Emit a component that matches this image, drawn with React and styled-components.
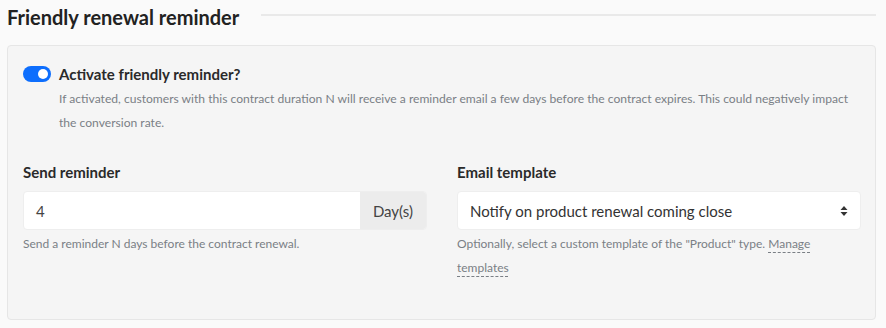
import styled, { createGlobalStyle } from "styled-components";

const Global = createGlobalStyle`
  body {
    margin: 0;
    background: #fafafa;
    font-family: Lato, "Liberation Sans", sans-serif;
    color: #212529;
  }
`;

const Page = styled.div`
  padding: 3px 10px 7px 7px;
`;

const Header = styled.div`
  display: flex;
  align-items: center;
  gap: 22px;
  height: 27px;
  h2 {
    margin: 0;
    font-size: 20px;
    font-weight: 700;
    color: #222;
    white-space: nowrap;
  }
`;

const Rule = styled.div`
  flex: 1;
  height: 2px;
  margin-top: -3px;
  background: #e9e9e9;
`;

const Card = styled.div`
  margin-top: 15px;
  background: #f5f5f5;
  border: 1px solid #e6e6e6;
  border-radius: 4px;
  padding: 19px 14px 39px 15px;
`;

const SwitchRow = styled.div`
  display: flex;
  align-items: center;
  gap: 8px;
  height: 18px;
  font-size: 15px;
  font-weight: 700;
  color: #2a2a2a;
`;

const Switch = styled.span`
  position: relative;
  width: 28px;
  height: 16px;
  border-radius: 8px;
  background: ${(p) => (p.$on ? "#0d6efd" : "#ccc")};
  flex-shrink: 0;
  &::after {
    content: "";
    position: absolute;
    top: 3px;
    left: ${(p) => (p.$on ? "15px" : "3px")};
    width: 10px;
    height: 10px;
    border-radius: 50%;
    background: #fff;
  }
`;

const Hint = styled.p`
  margin: 4px 0 0 36px;
  font-size: 12.1px;
  line-height: 24px;
  color: #7a7f85;
`;

const Grid = styled.div`
  display: grid;
  grid-template-columns: 1fr 1fr;
  column-gap: 30px;
  margin-top: 27px;
`;

const Field = styled.div`
  display: flex;
  flex-direction: column;
`;

const Label = styled.label`
  font-size: 15px;
  font-weight: 700;
  color: #2a2a2a;
  line-height: 20px;
  margin-bottom: 9px;
`;

const InputGroup = styled.div`
  display: flex;
  height: 37px;
  border: 1px solid #eeeeee;
  border-radius: 4px;
  overflow: hidden;
  background: #fff;
`;

const Input = styled.div`
  flex: 1;
  display: flex;
  align-items: center;
  padding: 0 12px;
  font-size: 15px;
  color: #444;
`;

const Addon = styled.div`
  display: flex;
  align-items: center;
  padding: 0 13px;
  background: #ececec;
  font-size: 15px;
  color: #444;
`;

const Select = styled.div`
  display: flex;
  align-items: center;
  justify-content: space-between;
  height: 37px;
  border: 1px solid #eeeeee;
  border-radius: 4px;
  background: #fff;
  padding: 0 12px 0 12px;
  font-size: 15px;
  color: #333;
`;

const Help = styled.div`
  margin-top: 2px;
  font-size: 12px;
  line-height: 24px;
  color: #7a7f85;
  a {
    color: inherit;
    text-decoration: underline dashed #7a7f85;
    text-underline-offset: 4px;
  }
`;

const Caret = () => (
  <svg width="8" height="12" viewBox="0 0 8 12">
    <path d="M4 1 L7.5 5 H0.5 Z" fill="#333" />
    <path d="M4 11 L7.5 7 H0.5 Z" fill="#333" />
  </svg>
);

export default function App() {
  return (
    <Page>
      <Global />
      <Header>
        <h2>Friendly renewal reminder</h2>
        <Rule />
      </Header>
      <Card>
        <SwitchRow>
          <Switch $on />
          Activate friendly reminder?
        </SwitchRow>
        <Hint>
          If activated, customers with this contract duration N will receive a reminder email a few days before the
          contract expires. This could negatively impact the conversion rate.
        </Hint>
        <Grid>
          <Field>
            <Label>Send reminder</Label>
            <InputGroup>
              <Input>4</Input>
              <Addon>Day(s)</Addon>
            </InputGroup>
            <Help>Send a reminder N days before the contract renewal.</Help>
          </Field>
          <Field>
            <Label>Email template</Label>
            <Select>
              Notify on product renewal coming close
              <Caret />
            </Select>
            <Help>
              Optionally, select a custom template of the "Product" type. <a href="#">Manage templates</a>
            </Help>
          </Field>
        </Grid>
      </Card>
    </Page>
  );
}
